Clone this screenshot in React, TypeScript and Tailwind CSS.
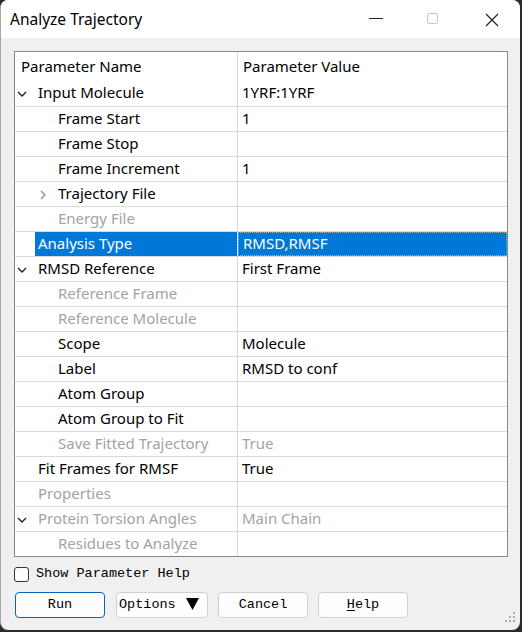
import React from 'react';

type Row = {
  name: string;
  value?: string;
  level: 0 | 1;
  chevron?: 'down' | 'right';
  disabled?: boolean;
  selected?: boolean;
};

const rows: Row[] = [
  { name: 'Input Molecule', value: '1YRF:1YRF', level: 0, chevron: 'down' },
  { name: 'Frame Start', value: '1', level: 1 },
  { name: 'Frame Stop', level: 1 },
  { name: 'Frame Increment', value: '1', level: 1 },
  { name: 'Trajectory File', level: 1, chevron: 'right' },
  { name: 'Energy File', level: 1, disabled: true },
  { name: 'Analysis Type', value: 'RMSD,RMSF', level: 0, selected: true },
  { name: 'RMSD Reference', value: 'First Frame', level: 0, chevron: 'down' },
  { name: 'Reference Frame', level: 1, disabled: true },
  { name: 'Reference Molecule', level: 1, disabled: true },
  { name: 'Scope', value: 'Molecule', level: 1 },
  { name: 'Label', value: 'RMSD to conf', level: 1 },
  { name: 'Atom Group', level: 1 },
  { name: 'Atom Group to Fit', level: 1 },
  { name: 'Save Fitted Trajectory', value: 'True', level: 1, disabled: true },
  { name: 'Fit Frames for RMSF', value: 'True', level: 0 },
  { name: 'Properties', level: 0, disabled: true },
  { name: 'Protein Torsion Angles', value: 'Main Chain', level: 0, chevron: 'down', disabled: true },
  { name: 'Residues to Analyze', level: 1, disabled: true },
];

const ChevronDown = () => (
  <svg width="10" height="6" viewBox="0 0 10 6" className="absolute left-[2px] top-[10px]">
    <polyline points="1,1 5,5 9,1" fill="none" stroke="#222" strokeWidth="1.4" />
  </svg>
);

const ChevronRight = () => (
  <svg width="6" height="10" viewBox="0 0 6 10" className="absolute left-[25px] top-[8px]">
    <polyline points="1,1 5,5 1,9" fill="none" stroke="#8a8a8a" strokeWidth="1.3" />
  </svg>
);

const TreeRow = ({ row, first }: { row: Row; first: boolean }) => {
  const textColor = row.selected ? 'text-white' : row.disabled ? 'text-[#a3a3a3]' : 'text-black';
  return (
    <div className={`flex h-[25px] ${first ? '' : 'border-t border-[#dadada]'}`}>
      <div className="relative w-[223px] shrink-0 border-r border-[#dadada] flex items-center">
        {row.chevron === 'down' && <ChevronDown />}
        {row.chevron === 'right' && <ChevronRight />}
        <div
          className={`h-full flex items-center pb-[2px] ${row.level === 0 ? 'ml-[20px] pl-[3px]' : 'ml-[43px]'} ${
            row.selected ? 'bg-[#0078d7] flex-1' : ''
          } ${textColor}`}
        >
          {row.name}
        </div>
      </div>
      <div
        className={`flex-1 flex items-center pl-[4px] pb-[2px] ${textColor} ${
          row.selected ? 'bg-[#0078d7] border border-dotted border-[#f5a33a]' : ''
        }`}
      >
        {row.value}
      </div>
    </div>
  );
};

const MonoButton = ({
  children,
  primary,
  width,
  align,
}: {
  children: React.ReactNode;
  primary?: boolean;
  width: string;
  align?: 'left';
}) => (
  <button
    className={`${width} h-[26px] rounded-[4px] bg-[#fdfdfd] border text-[13.5px] flex items-center ${
      align === 'left' ? 'justify-start pl-[2px]' : 'justify-center'
    } ${primary ? 'border-[#0067c0]' : 'border-[#d0d0d0]'}`}
  >
    {children}
  </button>
);

export default function App() {
  return (
    <div className="w-[522px] h-[632px] bg-[#2b2b2b] overflow-hidden">
      <div
        className="w-[520px] h-[630px] rounded-[8px] bg-[#f0f0f0] border-l border-[#a8a8a8] flex flex-col overflow-hidden relative"
        style={{ fontFamily: '"Noto Sans", "Open Sans", sans-serif' }}
      >
        {/* title bar */}
        <div className="h-[38px] bg-white flex items-center shrink-0 relative">
          <span className="ml-[9px] mt-[1px] text-[15.5px] text-black">Analyze Trajectory</span>
          <svg width="14" height="2" className="absolute left-[368px] top-[18px]">
            <rect x="0" y="0" width="14" height="1" fill="#222" />
          </svg>
          <svg width="12" height="12" className="absolute left-[426px] top-[13px]">
            <rect x="0.5" y="0.5" width="10" height="10" rx="1.5" fill="none" stroke="#c8c8c8" />
          </svg>
          <svg width="14" height="14" className="absolute left-[484px] top-[13px]">
            <path d="M1 1 L13 13 M13 1 L1 13" stroke="#222" strokeWidth="1.2" />
          </svg>
        </div>

        <div className="pl-[13px] pt-[13px] flex flex-col">
          {/* tree table */}
          <div className="w-[494px] h-[506px] border border-[#828790] bg-white text-[15px] leading-none">
            <div className="flex h-[29px]">
              <div className="w-[223px] shrink-0 border-r border-[#dadada] flex items-center pl-[6px] pb-[1px] text-black">
                Parameter Name
              </div>
              <div className="flex-1 flex items-center pl-[5px] pb-[1px] text-black">Parameter Value</div>
            </div>
            {rows.map((r, i) => (
              <TreeRow key={r.name} row={r} first={i === 0} />
            ))}
          </div>

          {/* checkbox */}
          <div className="flex items-center mt-[9px] h-[16px]" style={{ fontFamily: '"Liberation Mono", monospace' }}>
            <div className="w-[15px] h-[15px] rounded-[3px] border border-[#333] bg-[#fdfdfd]" />
            <span className="ml-[7px] text-[13.5px] text-black">Show Parameter Help</span>
          </div>

          {/* buttons */}
          <div
            className="flex mt-[10px] ml-[1px] text-black"
            style={{ fontFamily: '"Liberation Mono", monospace' }}
          >
            <MonoButton primary width="w-[90px]">Run</MonoButton>
            <div className="w-[11px]" />
            <MonoButton width="w-[92px]" align="left">
              <span>Options</span>
              <svg width="13" height="12" viewBox="0 0 13 12" className="ml-[10px] mb-[2px]">
                <polygon points="0,0 13,0 6.5,12" fill="#000" />
              </svg>
            </MonoButton>
            <div className="w-[10px]" />
            <MonoButton width="w-[90px]">Cancel</MonoButton>
            <div className="w-[10px]" />
            <MonoButton width="w-[90px]">
              <span className="underline underline-offset-2">H</span>elp
            </MonoButton>
          </div>
        </div>

        {/* resize grip */}
        <svg width="12" height="12" className="absolute right-[3px] bottom-[6px]">
          <rect x="8" y="0" width="2" height="2" fill="#aaa" />
          <rect x="4" y="4" width="2" height="2" fill="#aaa" />
          <rect x="8" y="4" width="2" height="2" fill="#aaa" />
          <rect x="0" y="8" width="2" height="2" fill="#aaa" />
          <rect x="4" y="8" width="2" height="2" fill="#aaa" />
          <rect x="8" y="8" width="2" height="2" fill="#aaa" />
        </svg>
      </div>
    </div>
  );
}
